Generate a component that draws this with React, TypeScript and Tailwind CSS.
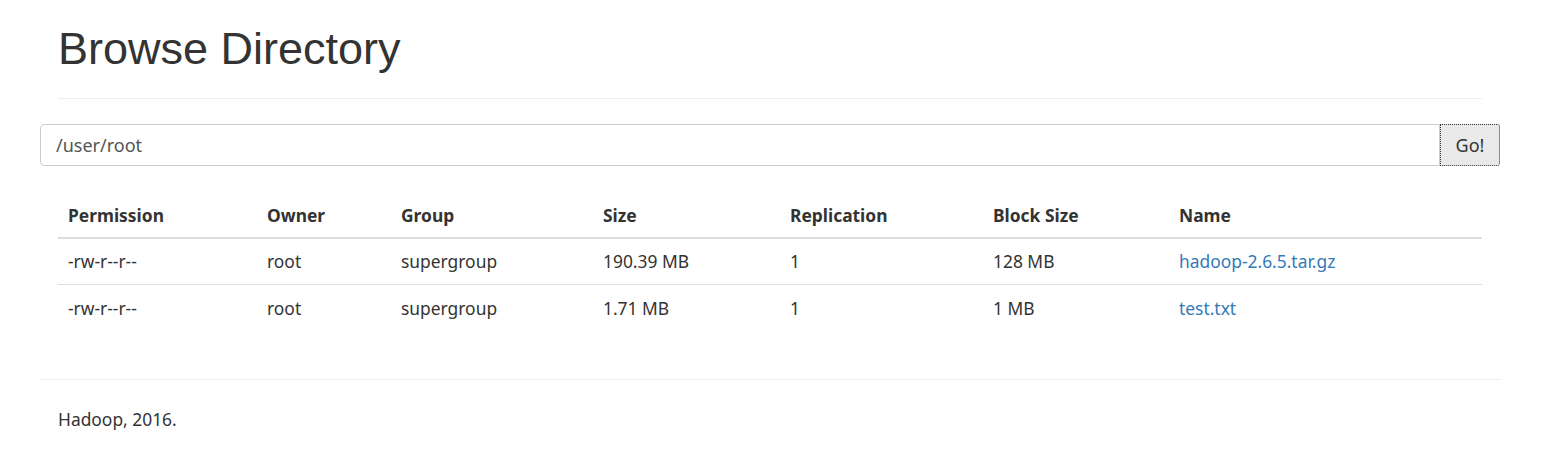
const rows = [
  { perm: "-rw-r--r--", owner: "root", group: "supergroup", size: "190.39 MB", repl: "1", block: "128 MB", name: "hadoop-2.6.5.tar.gz" },
  { perm: "-rw-r--r--", owner: "root", group: "supergroup", size: "1.71 MB", repl: "1", block: "1 MB", name: "test.txt" },
];

const cols = "grid grid-cols-[199px_134px_202px_187px_203px_186px_1fr]";

export default function App() {
  return (
    <div className="w-[1544px] h-[451px] bg-white text-[#333] font-['Noto_Sans',sans-serif]">
      <div className="ml-[40px] w-[1460px]">
        {/* header */}
        <div className="mx-[18px] pt-[22px] pb-[22px] border-b border-[#eee]">
          <h1 className="font-['Liberation_Sans',Arial,sans-serif] text-[45px] leading-[54px] font-normal">Browse Directory</h1>
        </div>

        {/* path form */}
        <div className="flex mt-[25px] h-[42px]">
          <input
            defaultValue="/user/root"
            className="flex-1 h-full border border-[#ccc] rounded-l-[4px] px-[15px] text-[18px] text-[#555] outline-none"
          />
          <button className="w-[60px] h-full bg-[#e9e9e9] border border-dotted border-[#333] rounded-r-[3px] text-[18px] text-[#333]">
            Go!
          </button>
        </div>

        {/* listing */}
        <div className="mx-[18px] mt-[27px] text-[17.4px]">
          <div className={`${cols} h-[46px] items-center border-b-2 border-[#ddd] font-bold`}>
            <div className="px-[10px]">Permission</div>
            <div className="px-[10px]">Owner</div>
            <div className="px-[10px]">Group</div>
            <div className="px-[10px]">Size</div>
            <div className="px-[10px]">Replication</div>
            <div className="px-[10px]">Block Size</div>
            <div className="px-[10px]">Name</div>
          </div>
          {rows.map((r, i) => (
            <div key={i} className={`${cols} h-[46px] items-center ${i === 0 ? "border-b border-[#ddd]" : ""}`}>
              <div className="px-[10px]">{r.perm}</div>
              <div className="px-[10px]">{r.owner}</div>
              <div className="px-[10px]">{r.group}</div>
              <div className="px-[10px]">{r.size}</div>
              <div className="px-[10px]">{r.repl}</div>
              <div className="px-[10px]">{r.block}</div>
              <div className="px-[10px]">
                <a href="#" className="text-[#337ab7]">{r.name}</a>
              </div>
            </div>
          ))}
        </div>

        {/* footer */}
        <div className="mt-[48px] border-t border-[#eee] pt-[26px] px-[18px] text-[17.4px]">
          Hadoop, 2016.
        </div>
      </div>
    </div>
  );
}
